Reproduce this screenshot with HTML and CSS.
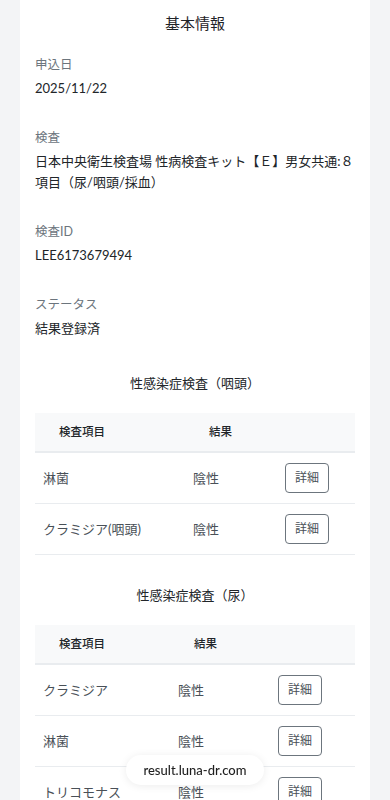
FILE: index.html
```html
<!DOCTYPE html>
<html lang="ja">
<head>
<meta charset="utf-8">
<meta name="viewport" content="width=device-width, initial-scale=1">
<title>検査結果</title>
<link rel="stylesheet" href="styles.css">
</head>
<body>
<main class="card">
  <h2 class="card-title">基本情報</h2>
  <div class="field">
    <div class="label">申込日</div>
    <div class="value">2025/11/22</div>
  </div>
  <div class="field">
    <div class="label">検査</div>
    <div class="value">日本中央衛生検査場 性病検査キット【Ｅ】男女共通:８項目（尿/咽頭/採血）</div>
  </div>
  <div class="field">
    <div class="label">検査ID</div>
    <div class="value">LEE6173679494</div>
  </div>
  <div class="field">
    <div class="label">ステータス</div>
    <div class="value">結果登録済</div>
  </div>

  <section class="section section-first">
    <h3 class="section-title">性感染症検査（咽頭）</h3>
    <table class="results">
      <colgroup><col class="c1a"><col class="c2a"><col class="c3a"></colgroup>
      <thead><tr><th>検査項目</th><th>結果</th><th></th></tr></thead>
      <tbody>
        <tr><td>淋菌</td><td>陰性</td><td><button class="btn">詳細</button></td></tr>
        <tr><td>クラミジア(咽頭)</td><td>陰性</td><td><button class="btn">詳細</button></td></tr>
      </tbody>
    </table>
  </section>

  <section class="section">
    <h3 class="section-title">性感染症検査（尿）</h3>
    <table class="results">
      <colgroup><col class="c1b"><col class="c2b"><col class="c3b"></colgroup>
      <thead><tr><th>検査項目</th><th>結果</th><th></th></tr></thead>
      <tbody>
        <tr><td>クラミジア</td><td>陰性</td><td><button class="btn">詳細</button></td></tr>
        <tr><td>淋菌</td><td>陰性</td><td><button class="btn">詳細</button></td></tr>
        <tr><td>トリコモナス</td><td>陰性</td><td><button class="btn">詳細</button></td></tr>
        <tr><td>マイコプラズマ</td><td>陰性</td><td><button class="btn">詳細</button></td></tr>
      </tbody>
    </table>
  </section>
</main>
<div class="url-pill">result.luna-dr.com</div>
</body>
</html>
```
FILE: styles.css
```css
* { box-sizing: border-box; }
html, body { margin: 0; padding: 0; }
body {
  background: #f3f4f6;
  font-family: Lato, "Noto Sans CJK JP", sans-serif;
  color: #212529;
  padding: 0 20px;
}
.card {
  background: #ffffff;
  padding: 12px 15px 40px;
  min-height: 900px;
}
.card-title {
  margin: 0 0 21px;
  font-size: 15px;
  line-height: 22px;
  font-weight: 400;
  text-align: center;
  color: #1f2328;
}
.field { margin-bottom: 29px; }
.label {
  font-size: 12.5px;
  line-height: 20px;
  color: #6c757d;
  margin-bottom: 3px;
}
.value {
  font-size: 13px;
  line-height: 21px;
  color: #212529;
}
.section-first { margin-top: 34px; }
.section { margin-bottom: 30px; }
.section-title {
  margin: 0 0 20px;
  font-size: 13px;
  line-height: 20px;
  font-weight: 400;
  text-align: center;
}
.results {
  width: 100%;
  border-collapse: collapse;
  table-layout: fixed;
}
.c1a { width: 150px; }
.c2a { width: 92px; }
.c3a { width: 78px; }
.c1b { width: 135px; }
.c2b { width: 100px; }
.c3b { width: 85px; }
.results th {
  background: #f8f9fa;
  font-size: 11.5px;
  line-height: 14px;
  font-weight: 500;
  text-align: left;
  padding: 12px 24px;
  border-bottom: 2px solid #e9ecef;
  color: #212529;
}
.results td {
  font-size: 13px;
  line-height: 20px;
  color: #495057;
  padding: 10px 8px;
  border-bottom: 1px solid #e9ecef;
  vertical-align: middle;
}
.btn {
  font-family: inherit;
  font-size: 12px;
  line-height: 18px;
  height: 30px;
  width: 44px;
  padding: 5px 0;
  text-align: center;
  color: #495057;
  background: #fff;
  border: 1px solid #6c757d;
  border-radius: 4px;
  display: block;
}
.url-pill {
  position: fixed;
  left: 50%;
  bottom: 15px;
  transform: translateX(-50%);
  width: 138px;
  height: 30px;
  border-radius: 15px;
  background: #ffffff;
  box-shadow: 0 1px 8px rgba(0,0,0,0.08);
  font-size: 13px;
  line-height: 30px;
  text-align: center;
  color: #1f1f1f;
  font-weight: 500;
}
```
